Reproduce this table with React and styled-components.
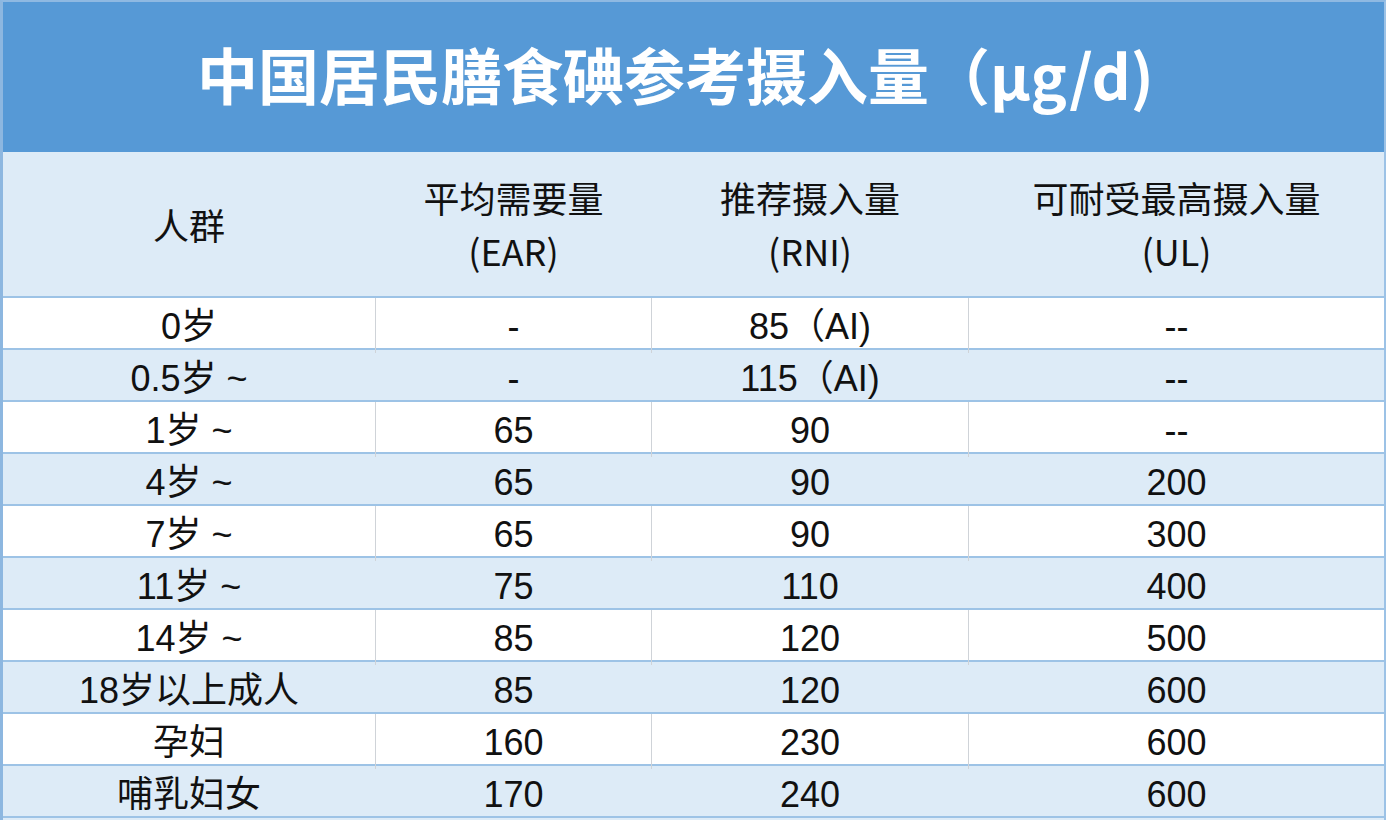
import React from 'react'
import styled, { createGlobalStyle } from 'styled-components'

const GlobalStyle = createGlobalStyle`
  html, body {
    margin: 0;
    padding: 0;
    background: #ffffff;
  }
  body {
    font-family: "Liberation Sans", "Noto Sans CJK SC", sans-serif;
    color: #111;
  }
`

const Sheet = styled.div`
  width: 1386px;
  height: 820px;
  box-sizing: border-box;
  border-left: 3px solid #8db7e0;
  border-right: 2px solid #9cc2e6;
  border-top: 2px solid #8fb9e2;
  background: #ddebf7;
  overflow: hidden;
`

const Title = styled.h1`
  margin: 0;
  height: 150px;
  display: flex;
  align-items: center;
  justify-content: center;
  padding: 0 36px 8px 0;
  box-sizing: border-box;
  background: #5699d6;
  color: #fff;
  font-family: "Noto Sans CJK SC", sans-serif;
  font-weight: 700;
  font-size: 61px;
`

const Row = styled.div`
  display: grid;
  grid-template-columns: 372px 276px 317px 1fr;
  height: ${p => p.$h}px;
  box-sizing: border-box;
  border-bottom: 2px solid #9dc3e6;
  background: ${p => (p.$alt ? '#ddebf7' : '#ffffff')};
`

const Cell = styled.div`
  display: flex;
  flex-direction: column;
  align-items: center;
  justify-content: center;
  font-size: 36px;
  line-height: 53px;
  padding-top: ${p => (p.$head ? '0' : '2px')};
  border-left: 1px solid ${p => (p.$line ? '#cfd3d8' : 'transparent')};
  &:first-child {
    border-left: none;
  }
`

const Heading = styled.span`
  font-family: "Noto Sans CJK SC", sans-serif;
  font-size: 36px;
`

const Num = styled.span`
  font-family: "Liberation Sans", "Noto Sans CJK SC", sans-serif;
  white-space: pre;
`

const head = [
  ['人群'],
  ['平均需要量', '(EAR)'],
  ['推荐摄入量', '(RNI)'],
  ['可耐受最高摄入量', '(UL)']
]

const rows = [
  ['0岁', '-', '85（AI)', '--'],
  ['0.5岁 ~', '-', '115（AI)', '--'],
  ['1岁 ~', '65', '90', '--'],
  ['4岁 ~', '65', '90', '200'],
  ['7岁 ~', '65', '90', '300'],
  ['11岁 ~', '75', '110', '400'],
  ['14岁 ~', '85', '120', '500'],
  ['18岁以上成人', '85', '120', '600'],
  ['孕妇', '160', '230', '600'],
  ['哺乳妇女', '170', '240', '600']
]

export default function App() {
  return (
    <>
      <GlobalStyle />
      <Sheet>
        <Title>中国居民膳食碘参考摄入量（μg/d)</Title>
        <Row $h={146} $alt>
          {head.map((lines, i) => (
            <Cell key={i} $head>
              {lines.map(l => (
                <Heading key={l}>{l}</Heading>
              ))}
            </Cell>
          ))}
        </Row>
        {rows.map((r, i) => (
          <Row key={i} $h={52} $alt={i % 2 === 1}>
            {r.map((v, j) => (
              <Cell key={j} $line={i % 2 === 0}>
                <Num>{v}</Num>
              </Cell>
            ))}
          </Row>
        ))}
      </Sheet>
    </>
  )
}
